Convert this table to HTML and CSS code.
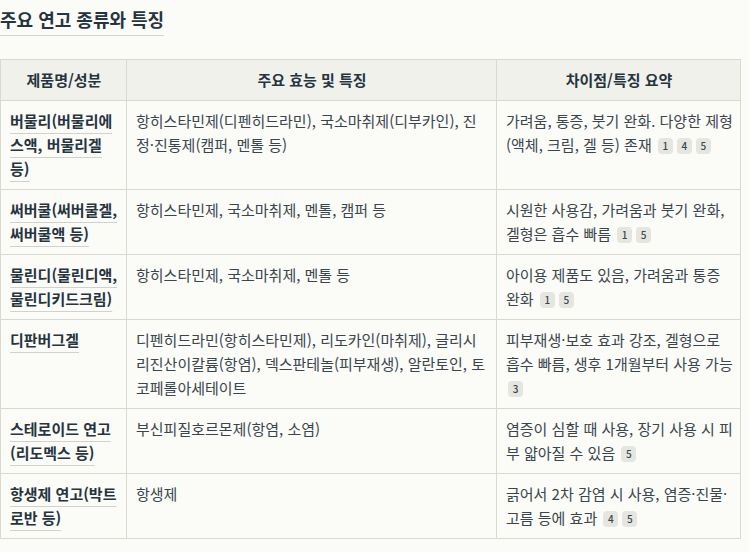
FILE: index.html
```html
<!DOCTYPE html>
<html lang="ko">
<head>
<meta charset="utf-8">
<link rel="stylesheet" href="styles.css">
</head>
<body>
<h3 class="title">주요 연고 종류와 특징</h3>
<table class="tbl">
  <colgroup><col class="c1"><col class="c2"><col class="c3"></colgroup>
  <thead>
    <tr><th>제품명/성분</th><th>주요 효능 및 특징</th><th>차이점/특징 요약</th></tr>
  </thead>
  <tbody>
    <tr>
      <td><b class="name">버물리(버물리에스액, 버물리겔 등)</b></td>
      <td>항히스타민제(디펜히드라민), 국소마취제(디부카인), 진정·진통제(캠퍼, 멘톨 등)</td>
      <td class="sum">가려움, 통증, 붓기 완화. 다양한 제형(액체, 크림, 겔 등) 존재 <span class="ref">1</span><span class="ref">4</span><span class="ref">5</span></td>
    </tr>
    <tr>
      <td><b class="name">써버쿨(써버쿨겔, 써버쿨액 등)</b></td>
      <td>항히스타민제, 국소마취제, 멘톨, 캠퍼 등</td>
      <td class="sum">시원한 사용감, 가려움과 붓기 완화, 겔형은 흡수 빠름 <span class="ref">1</span><span class="ref">5</span></td>
    </tr>
    <tr>
      <td><b class="name">물린디(물린디액, 물린디키드크림)</b></td>
      <td>항히스타민제, 국소마취제, 멘톨 등</td>
      <td class="sum">아이용 제품도 있음, 가려움과 통증 완화 <span class="ref">1</span><span class="ref">5</span></td>
    </tr>
    <tr>
      <td><b class="name">디판버그겔</b></td>
      <td>디펜히드라민(항히스타민제), 리도카인(마취제), 글리시리진산이칼륨(항염), 덱스판테놀(피부재생), 알란토인, 토코페롤아세테이트</td>
      <td class="sum">피부재생·보호 효과 강조, 겔형으로 흡수 빠름, 생후 1개월부터 사용 가능 <span class="ref">3</span></td>
    </tr>
    <tr>
      <td><b class="name">스테로이드 연고(리도멕스 등)</b></td>
      <td>부신피질호르몬제(항염, 소염)</td>
      <td class="sum">염증이 심할 때 사용, 장기 사용 시 피부 얇아질 수 있음 <span class="ref">5</span></td>
    </tr>
    <tr>
      <td><b class="name">항생제 연고(박트로반 등)</b></td>
      <td>항생제</td>
      <td class="sum">긁어서 2차 감염 시 사용, 염증·진물·고름 등에 효과 <span class="ref">4</span><span class="ref">5</span></td>
    </tr>
  </tbody>
</table>
</body>
</html>
```
FILE: styles.css
```css
html, body {
  margin: 0;
  padding: 0;
  background: #fbfbf8;
}
body {
  font-family: "Noto Sans CJK KR", "Noto Sans", sans-serif;
  color: #3a454e;
  font-size: 15px;
}
.title {
  display: inline-block;
  margin: 0;
  padding: 7px 0 4px 0;
  font-size: 18px;
  line-height: 24px;
  font-weight: 600;
  color: #26343f;
  border-bottom: 1px solid #d4d4cf;
}
.tbl {
  margin-top: 23px;
  width: 740px;
  border-collapse: collapse;
  table-layout: fixed;
}
.c1 { width: 126px; }
.c2 { width: 370px; }
.c3 { width: 244px; }
.tbl th, .tbl td {
  border: 1px solid #d9d9d2;
  padding: 8px 8px 8px 9px;
  line-height: 24px;
  vertical-align: top;
  text-align: left;
}
.tbl td.sum {
  padding-right: 6.5px;
}
.tbl th {
  background: #f1f1ec;
  color: #26343f;
  font-weight: 700;
  text-align: center;
}
.name {
  font-weight: 700;
  color: #26343f;
  text-decoration: underline;
  text-decoration-color: #d2d2cc;
  text-decoration-thickness: 1px;
  text-underline-offset: 6px;
}
.ref {
  display: inline-block;
  width: 15px;
  height: 16px;
  line-height: 16px;
  margin-left: 4px;
  box-sizing: border-box;
  border-radius: 4px;
  background: #e6e6e1;
  color: #3a464e;
  font-size: 10px;
  font-weight: 500;
  text-align: center;
  vertical-align: 1px;
}
.ref:first-of-type {
  margin-left: 2px;
}
```
